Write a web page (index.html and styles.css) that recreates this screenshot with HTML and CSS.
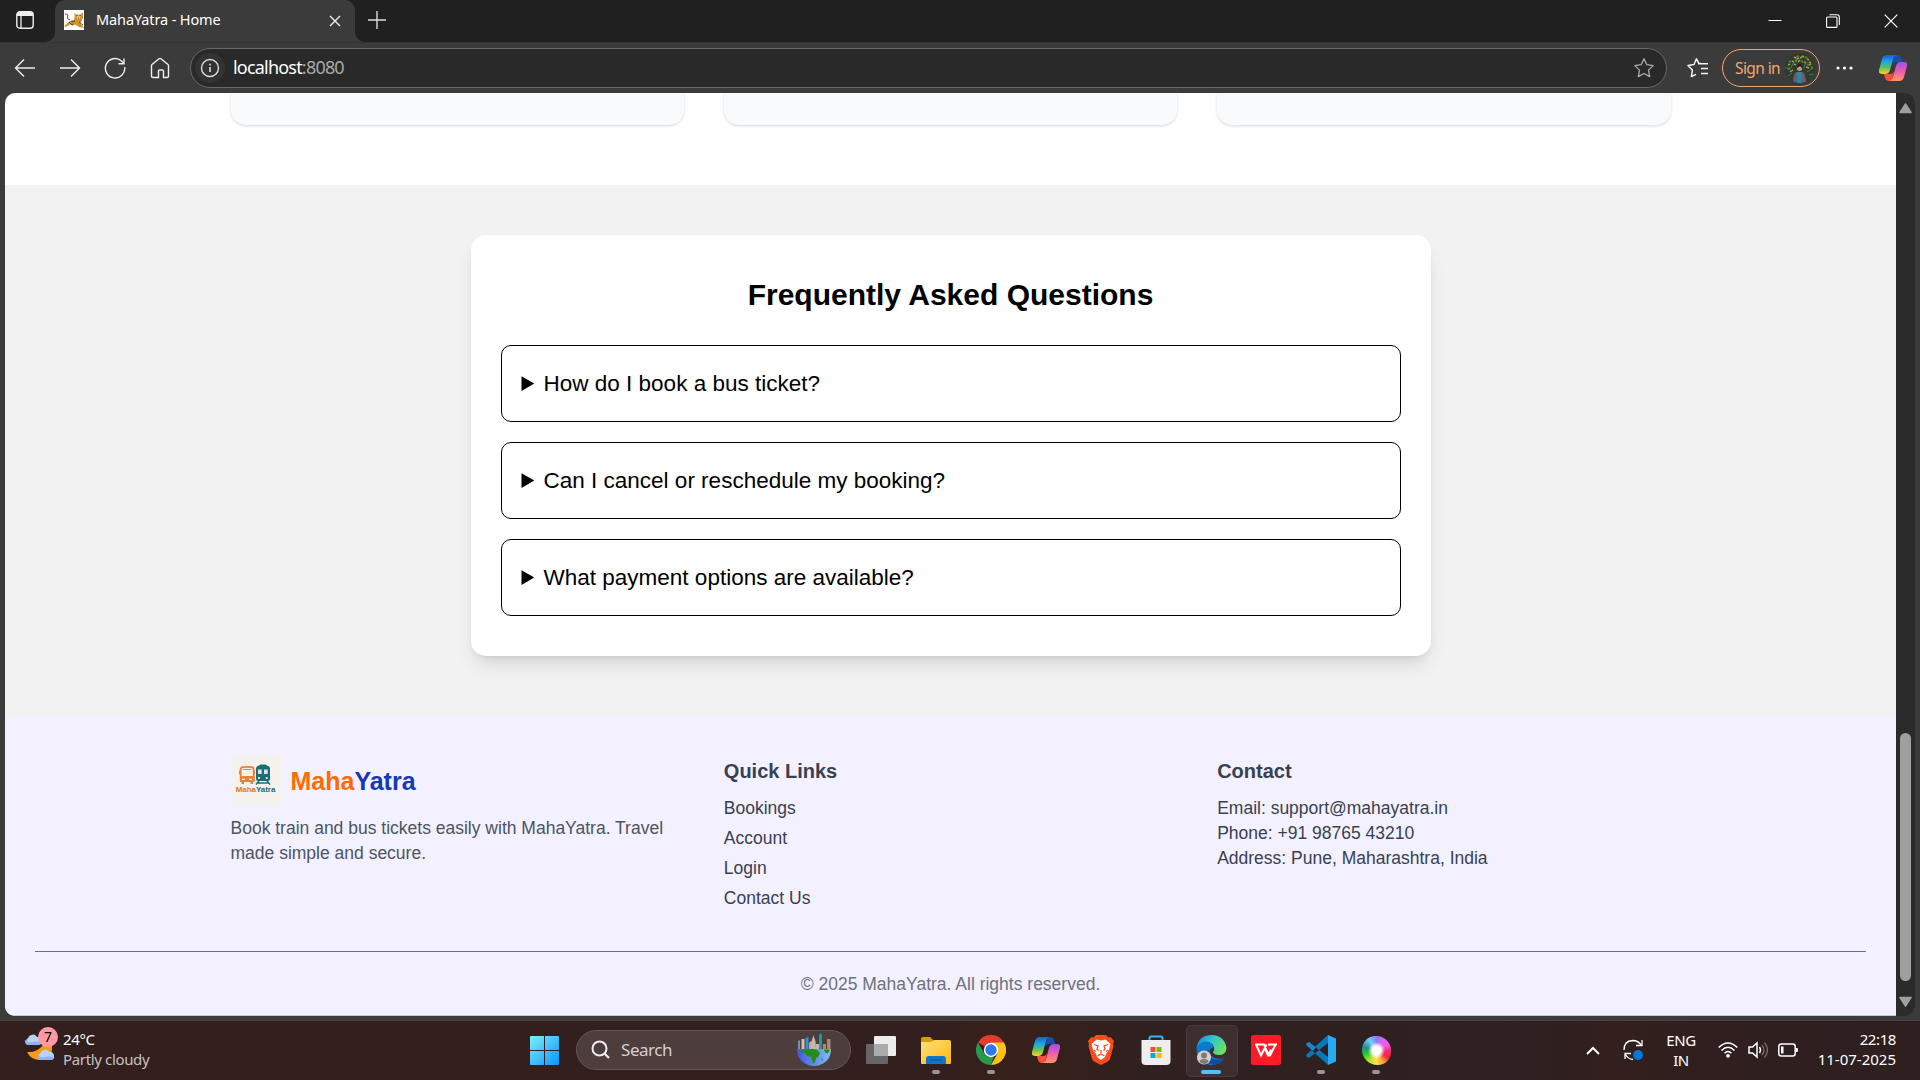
FILE: index.html
```html
<!DOCTYPE html>
<html lang="en">
<head>
<meta charset="utf-8">
<title>MahaYatra - Home</title>
<link rel="stylesheet" href="styles.css">
</head>
<body>
<svg class="defs" width="0" height="0">
  <defs>
    <linearGradient id="cpA" x1="0" y1="0" x2="0" y2="1"><stop offset="0" stop-color="#1b5fd0"/><stop offset=".35" stop-color="#1da5ea"/><stop offset=".65" stop-color="#5cbf62"/><stop offset="1" stop-color="#ffd21e"/></linearGradient>
    <linearGradient id="cpB" x1="0" y1="0" x2="0" y2="1"><stop offset="0" stop-color="#9c50f0"/><stop offset=".5" stop-color="#ee5da8"/><stop offset="1" stop-color="#ff9a62"/></linearGradient>
    <symbol id="copilot" viewBox="0 0 28 26">
      <path d="M15 0h4q2 0 3 3l1 4h-6q-3 0-4 3z" fill="#174fae"/>
      <path d="M13 26H9q-2 0-3-3l-1-4h6q3 0 4-3z" fill="#f4503c"/>
      <path d="M8 0h10q-3 0-4 4l-3 11q-1 4-5 4H3q-4 0-3-4L3 4Q4 0 8 0z" fill="url(#cpA)"/>
      <path d="M20 26H10q3 0 4-4l3-11q1-4 5-4h3q4 0 3 4l-3 11q-1 4-5 4z" fill="url(#cpB)"/>
    </symbol>
    <symbol id="cloud" viewBox="0 0 18 12"><path d="M4 12a4 4 0 0 1 0-7 5 5 0 0 1 9-1 4 4 0 0 1 1 8z" fill="#b9d2f8"/><path d="M4 12a4 4 0 0 1-3-5q3 3 7 2t10 0a4 4 0 0 1-4 3z" fill="#8fb3ee"/></symbol>
  </defs>
</svg>
<div class="desktop">
  <header class="tabstrip">
    <div class="workspace">
      <svg width="18" height="18" viewBox="0 0 18 18"><rect x=".8" y=".8" width="16.4" height="16.4" rx="3" fill="none" stroke="#eee" stroke-width="1.4"/><path d="M1 4q0-3 3-3h10q3 0 3 3v1H1z" fill="#eee"/><path d="M5 5v12" stroke="#eee" stroke-width="1.3"/></svg>
    </div>
    <div class="tab">
      <svg class="favicon" width="20" height="20" viewBox="0 0 20 20"><path d="M0 0h20v20H0z" fill="#fff"/><path d="M0 16q3-2 5-4.500l5-1.500.5-2 0-5 2 1.500h4l2.500-2 0 5-1.500 4-1.500 1.500 4 5-5-1-4-2.500-5 0-4 2.500z" fill="#cf922f"/><path d="M12.500 5h4l-.5 4h-3z" fill="#e8bf6c"/><path d="M6 10Q2 9 3.500 6.500T1 4M11 11q-2 1-4 0M15 12l4 3M5 12l3 3 2-1" fill="none" stroke="#333" stroke-width=".9"/><path d="M12.500 5.500h1M15.500 5.500h1M14 8h1" stroke="#4a3518"/></svg>
      <span class="tab-title">MahaYatra - Home</span>
      <svg class="tab-close" width="12" height="12" viewBox="0 0 12 12"><path d="M1 1l10 10M11 1L1 11" stroke="#eee" stroke-width="1.4"/></svg>
    </div>
    <div class="strip-rest">
      <svg class="newtab" width="18" height="18" viewBox="0 0 18 18"><path d="M9 0v18M0 9h18" stroke="#ddd" stroke-width="1.4"/></svg>
      <div class="window-buttons">
        <svg width="14" height="14" viewBox="0 0 14 14"><path d="M.5 6.500h13" stroke="#fff"/></svg>
        <svg width="14" height="14" viewBox="0 0 14 14"><rect x=".6" y="3" width="10.400" height="10.400" rx="1" fill="none" stroke="#fff" stroke-width="1.1"/><path d="M3.500 .8H11q2.300 0 2.300 2.300v8" fill="none" stroke="#fff" stroke-width="1.100"/></svg>
        <svg width="14" height="14" viewBox="0 0 14 14"><path d="M.7 .7l12.600 12.600M13.300 .7L.7 13.300" stroke="#fff" stroke-width="1.200"/></svg>
      </div>
    </div>
  </header>

  <nav class="toolbar">
    <div class="nav-icons">
      <svg width="22" height="22" viewBox="0 0 22 22"><path d="M10 2.500L1.500 11l8.500 8.500M1.500 11H21"/></svg>
      <svg width="22" height="22" viewBox="0 0 22 22"><path d="M12 2.500l8.500 8.500-8.500 8.500M20.500 11H1"/></svg>
      <svg width="22" height="22" viewBox="0 0 22 22"><path d="M20.700 10A9.700 9.700 0 1 1 17.500 4L20 6.500M20 1.500v5.300h-5.500"/></svg>
      <svg width="22" height="22" viewBox="0 0 22 22"><path d="M2.500 8.500Q2.500 8 3 7.500L10 1.800q1-.8 2 0l7 5.700q.5.500.5 1V19q0 1.500-1.500 1.500h-3.500V14q0-1-1-1h-3q-1 0-1 1v6.500H4Q2.500 20.500 2.500 19z"/></svg>
    </div>
    <div class="address">
      <span class="info"><svg width="20" height="20" viewBox="0 0 20 20"><circle cx="10" cy="10" r="8.500" fill="none" stroke="#ddd" stroke-width="1.400"/><path d="M10 9v5M10 5.700v1.800" stroke="#ddd" stroke-width="1.600"/></svg></span>
      <span class="url">localhost<span class="port">:8080</span></span>
      <svg class="star" width="22" height="22" viewBox="0 0 22 22"><path d="M11 1.800l2.800 5.900 6.400.9-4.700 4.500 1.200 6.500L11 16.500l-5.700 3.100 1.200-6.500L1.800 8.600l6.400-.9z" fill="none" stroke="#aaa" stroke-width="1.300" stroke-linejoin="round"/></svg>
    </div>
    <svg class="favs" width="22" height="22" viewBox="0 0 22 22"><path d="M14 6.500L11.800 6.300 9.500 1.800 7 7.500l-6 .9 4.400 4.500L4.400 19.600 9 17.300M11 6.700h10M14 11.500h7M14 16.500h7" fill="none" stroke="#f4f4f4" stroke-width="1.500" stroke-linejoin="round"/></svg>
    <div class="signin"><span class="signin-text">Sign in</span>
      <svg width="30" height="30" viewBox="0 0 30 30"><clipPath id="av"><circle cx="15" cy="15" r="15"/></clipPath><g clip-path="url(#av)"><path d="M0 0h30v30H0z" fill="#2d3c2c"/><path d="M3 12l2-1M9 4l2 1M17 3l2 1M22 6l2 1M13 9l2-2M24 12l2-1M5 19l3-2M21 14l3 1M7 8l2 1M19 9l2 1M12 6l2-1M15 5l2-1M24 9l2 1M9 11l2 1" stroke="#a1a332" stroke-width="1.500"/><path d="M4 9l2-1M12 3l2 1M20 4l2 1M16 8l2 1M26 14l2 1M3 16l2-1M22 11l2 1M10 8l2-1" stroke="#5f7a35" stroke-width="2"/><path d="M0 14l7 4M9 8l-3 7M21 8l-2 7M28 15l-6 4M12 3l-1 7M3 23l4-3M24 22l4-1" stroke="#587f80" stroke-width=".8"/><path d="M8 30q0-10 4-11h5q4 1 4 11z" fill="#6b5a72"/><path d="M12.500 19h4v11h-4z" fill="#248aa0"/><circle cx="14.500" cy="15.500" r="2.500" fill="#c39789"/><path d="M12 15q0-4 2.500-4t2.500 4l-2-2z" fill="#221c20"/></g></svg>
    </div>
    <svg class="dots" width="17" height="4" viewBox="0 0 17 4"><circle cx="2" cy="2" r="1.600" fill="#fff"/><circle cx="8.500" cy="2" r="1.600" fill="#fff"/><circle cx="15" cy="2" r="1.600" fill="#fff"/></svg>
    <svg class="copilot-btn" width="28" height="26"><use href="#copilot"/></svg>
  </nav>

  <div class="viewport">
    <main class="page">
      <section class="cards"><div class="container grid"><div class="card"></div><div class="card"></div><div class="card"></div></div></section>
      <section class="faq">
        <div class="faq-card">
          <h2>Frequently Asked Questions</h2>
          <details><summary><span>How do I book a bus ticket?</span></summary></details>
          <details><summary><span>Can I cancel or reschedule my booking?</span></summary></details>
          <details><summary><span>What payment options are available?</span></summary></details>
        </div>
      </section>
      <footer class="footer">
        <div class="container grid">
          <div>
            <div class="brand">
              <svg width="50" height="50" viewBox="0 0 50 50"><path d="M0 0h50v50H0z" fill="#f5f1ed"/>
                <path d="M9.700 25V13.500q0-2 2-2.300 4.500-.7 9 0 2 .3 2 2.300V25" fill="none" stroke="#e5853b" stroke-width="1.800"/><path d="M9 20h14.500v6H9zM10.500 25h2.500v3h-2.500zM19.500 25H22v3h-2.500zM8 14.500h1.500v4H8zM22.500 14.500H24v4h-1.500z" fill="#e5853b"/><path d="M11 23.300h3M18 23.300h3" stroke="#f5f1ed" stroke-width="1.300"/><path d="M12 13.500h8.500" stroke="#e5853b"/>
                <path d="M25 23V13q0-3 3-3.500l1.500-1h5l1.500 1q3 .5 3 3.500v10q0 2-2 2H27q-2 0-2-2z" fill="#176e79"/><path d="M27 13.500h3.700v4.500H27zM33 13.500h3.700v4.500H33z" fill="#d9e5e2"/><circle cx="28" cy="22" r="1.100" fill="#f5f1ed"/><circle cx="35.700" cy="22" r="1.100" fill="#f5f1ed"/><path d="M28 25l-3 3.500M36 25l3 3.500M27 27h10" stroke="#176e79" stroke-width="1.500"/>
                <text x="4.800" y="36" textLength="39.500" lengthAdjust="spacingAndGlyphs" class="logo-text"><tspan fill="#dd7434">Maha</tspan><tspan fill="#246b73">Yatra</tspan></text></svg>
              <span class="brand-name"><span class="maha">Maha</span><span class="yatra">Yatra</span></span>
            </div>
            <p class="tagline">Book train and bus tickets easily with MahaYatra. Travel made simple and secure.</p>
          </div>
          <div>
            <h3>Quick Links</h3>
            <ul class="links"><li>Bookings</li><li>Account</li><li>Login</li><li>Contact Us</li></ul>
          </div>
          <div>
            <h3>Contact</h3>
            <p>Email: support@mahayatra.in</p><p>Phone: +91 98765 43210</p><p>Address: Pune, Maharashtra, India</p>
          </div>
        </div>
        <div class="copyright">© 2025 MahaYatra. All rights reserved.</div>
      </footer>
    </main>
    <aside class="scrollbar">
      <svg width="13" height="11" viewBox="0 0 13 11"><path d="M6.500 1L12 9.500H1z" fill="#9f9f9f" stroke="#9f9f9f" stroke-width="1.500" stroke-linejoin="round"/></svg>
      <div class="thumb"></div>
      <svg class="down" width="13" height="11" viewBox="0 0 13 11"><path d="M6.500 10L12 1.500H1z" fill="#9f9f9f" stroke="#9f9f9f" stroke-width="1.500" stroke-linejoin="round"/></svg>
    </aside>
  </div>

  <footer class="taskbar">
    <div class="weather">
      <svg width="36" height="36" viewBox="0 0 36 36"><use href="#cloud" x="0" y="7" width="18" height="12"/><path d="M28 15v8q0 10-12 11-9 0-13-8 10 1 16-7z" fill="#f59a1c"/><use href="#cloud" x="12" y="22" width="19" height="12"/><circle cx="24" cy="11" r="10" fill="#ff99a4"/><text x="24" y="16" text-anchor="middle" class="badge">7</text></svg>
      <div><div class="temp">24°C</div><div class="cond">Partly cloudy</div></div>
    </div>
    <div class="app">
      <svg width="29" height="29" viewBox="0 0 29 29"><defs><linearGradient id="win" x1="0" y1="0" x2="1" y2="1" ><stop offset="0" stop-color="#7af0ff"/><stop offset="1" stop-color="#0c93fb"/></linearGradient></defs><path d="M1 0h13v14H0V1q0-1 1-1zM15 0h13q1 0 1 1v13H15zM0 15h14v14H1q-1 0-1-1zM15 15h14v13q0 1-1 1H15z" fill="url(#win)"/></svg>
    </div>
    <div class="search">
      <svg width="20" height="20" viewBox="0 0 20 20"><circle cx="8.500" cy="8.500" r="7" fill="none" stroke="#eee" stroke-width="2"/><path d="M13.500 13.500l4.500 4.500" stroke="#eee" stroke-width="2.200"/></svg>
      <span>Search</span>
      <svg class="globe" width="36" height="34" viewBox="0 0 36 34"><defs><linearGradient id="sea"><stop offset="0" stop-color="#4358d8"/><stop offset="1" stop-color="#83bdf7"/></linearGradient></defs><path d="M1 16h34q0 10-8 14.500-9 5-18 0Q1 26 1 16z" fill="url(#sea)"/><path d="M2 16V8l2-1v9z" fill="#6f90ae"/><path d="M5.500 6h3v10h-3z" fill="#d2c3a8"/><path d="M9.500 5l3-1v12h-3z" fill="#2e91dc"/><path d="M13 10l2-2 1 1v7h-3z" fill="#b9aaa4"/><path d="M15 16l.5-8L17 4l.5-2 .5 2 1.500 4 .5 8z" fill="#cbb5a8"/><path d="M20 11h3v5h-3z" fill="#c4b4aa"/><path d="M23 2l1.500-2L26 2v14h-3z" fill="#1b9ba1"/><path d="M27 11h3v5h-3zM31 6h3.500v10H31z" fill="#a98973"/><path d="M5 17l5-1 7 0 4 1 3 3-2 4-2 1-1 4-2 2-2-7-4-1-2-3-4-1zM28 16.500l6 0-2 4-3-1zM25 25l2 1-1 2z" fill="#278b1c"/></svg>
    </div>
    <div class="apps">
      <div class="app"><svg width="30" height="28" viewBox="0 0 30 28"><rect x="0" y="8" width="22" height="20" rx="1" fill="#666"/><rect x="8" width="22" height="20" rx="1" fill="#ececec"/><path d="M8 8h14v12H8z" fill="#aaa"/></svg></div>
      <div class="app run"><svg width="30" height="27" viewBox="0 0 30 27"><defs><linearGradient id="fold" x1="0" y1="0" x2="1" y2="1"><stop offset="0" stop-color="#ffe17a"/><stop offset="1" stop-color="#fdb812"/></linearGradient></defs><path d="M0 2q0-2 2-2h7l3 3v4H0z" fill="#dc9a0b"/><path d="M0 5h10l3-2h15q2 0 2 2v21q0 1-1 1H1q-1 0-1-1z" fill="url(#fold)"/><path d="M5 27v-5q0-3 3-3h14q3 0 3 3v5z" fill="#0f76c9"/><path d="M9 23h12" stroke="#07529b"/></svg></div>
      <div class="app run"><svg width="30" height="30" viewBox="0 0 30 30"><path d="M15 15L2 7.500A15 15 0 0 1 28 7.500z" fill="#e33b2e"/><path d="M15 7.500h13A15 15 0 0 1 15 30l6.500-11.500z" fill="#fbc116"/><path d="M2 7.500l6.500 11.200Q12 23 18 21.500L15 30A15 15 0 0 1 2 7.500z" fill="#269a49"/><circle cx="15" cy="15" r="7.200" fill="#fff"/><circle cx="15" cy="15" r="5.700" fill="#2a7bf0"/></svg></div>
      <div class="app"><svg width="28" height="26"><use href="#copilot"/></svg></div>
      <div class="app"><svg width="26" height="30" viewBox="0 0 26 30"><path d="M8 0h10l2.500 2.500 2-.5L26 6l-1 3 .5 2-3.500 13q-1 2-3 3l-6 3-6-3q-2-1-3-3L.5 11 1 9 0 6l3.500-4 2 .5z" fill="#fb4a1c"/><path d="M3.500 9l5-4.500 4.500 1 4.500-1 5 4.500-1.500 6-3 4-1 3-4 3-4-3-1-3-3-4z" fill="#fff"/><path d="M6 9.500l4 1.500-1 3 1.500 1.500M20 9.500L16 11l1 3-1.500 1.500M13 15v4.500M9.500 21l3.500-2 3.500 2M5.500 15l2.500 1.500M20.500 15L18 16.500" fill="none" stroke="#fb4a1c" stroke-width="1.300"/></svg></div>
      <div class="app"><svg width="30" height="30" viewBox="0 0 30 30"><path d="M8.500 7V3q0-1.500 1.500-1.500h10q1.500 0 1.500 1.500v4" fill="none" stroke="#2bb5ea" stroke-width="2"/><path d="M.5 5h29v21q0 4-4 4h-21q-4 0-4-4z" fill="#eee"/><path d="M9.500 12h5v5h-5z" fill="#f25022"/><path d="M15.500 12h5v5h-5z" fill="#7fba00"/><path d="M9.500 18h5v5h-5z" fill="#00a4ef"/><path d="M15.500 18h5v5h-5z" fill="#ffb900"/></svg></div>
      <div class="app run active"><svg width="31" height="30" viewBox="0 0 31 30"><defs><linearGradient id="ed" x1="0" y1=".2" x2="1" y2=".6"><stop offset="0" stop-color="#1688d6"/><stop offset=".45" stop-color="#30c4d3"/><stop offset="1" stop-color="#70e35a"/></linearGradient></defs><path d="M.5 14Q2 0 15.500 0q13 .5 15 13-.5 7-7 7-6 0-6.500-3 2-2 1-5-2-5-8-5-6 1-9.500 7z" fill="url(#ed)"/><path d="M.5 15q1-7 8-8.500 7-.5 9.500 5.500-5 1-4 6 2 7 14 5.500-4 6.500-12.500 6.500Q2 29 .5 15z" fill="#0d79cd"/><path d="M14 14q-4 8 4 10.500 4 1 10-1-4 6.500-11 6.500Q8 27 9 20q1-4 5-6z" fill="#124e9e"/><circle cx="8" cy="22.500" r="7" fill="#d3d0cc"/><circle cx="8" cy="20.500" r="3" fill="#817c78"/><path d="M3.500 27q0-3 4.500-3t4.500 3q-4 4-9 0z" fill="#817c78"/></svg></div>
      <div class="app"><svg width="30" height="30" viewBox="0 0 30 30"><rect width="30" height="30" rx="2.500" fill="#ff1a25"/><path d="M4 9.500h9l4.500 10.500M5 9.500l5 11 5.500-11M17.500 20.500l2.500-6M17 9.500h9M24.500 9.500L19 20.500h-2l-3-7" fill="none" stroke="#fff" stroke-width="2"/></svg></div>
      <div class="app run"><svg width="30" height="30" viewBox="0 0 30 30"><path d="M22 0l8 3.500v23L22 30z" fill="#29a9f2"/><path d="M0 9l3-2 19 15v8L1 11zM0 21l3 2L22 8V0L1 19z" fill="#0878bd"/><path d="M0 9l3-2 7 5.500L7 16z" fill="#1387cf"/></svg></div>
      <div class="app run"><div class="wheel"></div></div>
    </div>
    <div class="tray">
      <svg class="chev" width="14" height="9" viewBox="0 0 14 9"><path d="M1 8l6-6 6 6" fill="none" stroke="#fff" stroke-width="2"/></svg>
      <svg class="sync" width="20" height="22" viewBox="0 0 20 22"><path d="M1 11Q1 2 9.500 1.500q6 0 9 5M19 1v5.500h-6M2 20v-5.500h6M2 15q3 5 8 5.500" fill="none" stroke="#fff" stroke-width="1.300"/><circle cx="15" cy="16" r="5" fill="#0078d7"/></svg>
      <div class="lang">ENG<br>IN</div>
      <svg class="wifi" width="20" height="16" viewBox="0 0 20 16"><path d="M.7 5.500q9.300-9 18.600 0M3.500 8.500q6.500-6.500 13 0M6.500 11.300q3.500-3.500 7 0" fill="none" stroke="#fff" stroke-width="1.500"/><circle cx="10" cy="13.800" r="1.900" fill="#fff"/></svg>
      <svg class="vol" width="21" height="18" viewBox="0 0 21 18"><path d="M1 6h3.500L9 2v14l-4.500-4H1z" fill="none" stroke="#fff" stroke-width="1.500"/><path d="M11.500 6q2 3 0 6" fill="none" stroke="#fff" stroke-width="1.400"/><path d="M14 4q4 5 0 10M16.500 1.500q6 7.500 0 15" fill="none" stroke="#7c6c6b" stroke-width="1.300"/></svg>
      <svg class="bat" width="21" height="14" viewBox="0 0 21 14"><rect x=".8" y="1" width="16.400" height="12" rx="2.500" fill="none" stroke="#fff" stroke-width="1.500"/><path d="M3 3.500h2.500v7H3zM18 5h1q1 0 1 1v2q0 1-1 1h-1z" fill="#fff"/></svg>
      <div class="clock"><span class="time">22:18</span><span class="date">11-07-2025</span></div>
    </div>
  </footer>
</div>
</body>
</html>
```
FILE: styles.css
```css
* { box-sizing: border-box; margin: 0; padding: 0; }
body { width: 1920px; height: 1080px; overflow: hidden; font-family: "Liberation Sans", Arial, sans-serif; background: #3b3b3b; }
svg { display: block; flex: none; }
.defs { position: absolute; }
.desktop { display: flex; flex-direction: column; height: 1080px; }

/* Tab strip */
.tabstrip { display: flex; height: 42px; background: linear-gradient(#3b3b3b, #3b3b3b) 40px 100% / 330px 12px no-repeat #202020; font-family: "Noto Sans", sans-serif; }
.workspace { width: 55px; height: 42px; padding: 11px 0 0 16px; background: #202020; border-radius: 0 0 10px 0; }
.tab { display: flex; align-items: center; width: 300px; height: 42px; padding: 0 14px 2px 9px; background: #3b3b3b; border-radius: 10px 10px 0 0; }
.tab-title { margin: -2px 0 0 12px; font-size: 14.5px; color: #fff; white-space: nowrap; letter-spacing: -0.12px; }
.tab-close { margin-left: auto; margin-top: 1px; }
.strip-rest { display: flex; flex: 1; background: #202020; border-radius: 0 0 0 10px; }
.newtab { margin: 11px 0 0 13px; }
.window-buttons { display: flex; gap: 44px; margin: 14px 22px 0 auto; }

/* Toolbar */
.toolbar { display: flex; align-items: center; height: 51px; padding-bottom: 1px; background: #3b3b3b; font-family: "Noto Sans", sans-serif; border-top: 1px solid #343434; }
.nav-icons { display: flex; gap: 23px; margin-left: 14px; width: 176px; fill: none; stroke: #eee; stroke-width: 1.4; }
.address { display: flex; align-items: center; width: 1477px; height: 40px; border: 1px solid #696969; border-radius: 20px; background: #292929; }
.info { display: flex; align-items: center; justify-content: center; width: 30px; height: 30px; margin-left: 4px; border-radius: 50%; background: #333; }
.url { margin: -1px 0 0 8px; font-size: 18px; letter-spacing: -0.8px; color: #fff; }
.port { color: #a8a8a8; }
.star { margin: 0 11px 0 auto; }
.favs { margin-left: 20px; }
.signin { display: flex; align-items: center; justify-content: space-between; width: 98px; height: 38px; margin-left: 13px; padding: 0 4px 0 12px; border: 1.5px solid #f3a66b; border-radius: 19px; color: #f3a66b; font-size: 15.5px; }
.signin-text { letter-spacing: -0.6px; white-space: nowrap; }
.dots { margin-left: 16px; }
.copilot-btn { margin-left: 26px; }

/* Browser page area */
.viewport { display: flex; height: 923px; margin: 0 5px; border-radius: 10px; overflow: hidden; }
.page { width: 1891px; display: flex; flex-direction: column; background: #fff; border-bottom: 1px solid #c6c4d4; }
.container { width: 1440px; margin: 0 auto; }
.grid { display: grid; grid-template-columns: repeat(3, 1fr); gap: 40px; }
.cards { height: 92px; }
.card { height: 32px; background: #f9fafb; border-radius: 0 0 15px 15px; box-shadow: 0 1px 3px rgba(0,0,0,.16); }
.faq { height: 531px; padding-top: 50px; background: #f2f2f2; }
.faq-card { width: 960px; margin: 0 auto; padding: 40px 30px; background: #fff; border-radius: 15px; box-shadow: 0 12px 19px -4px rgba(0,0,0,.11), 0 5px 8px -5px rgba(0,0,0,.12); }
.faq-card h2 { margin-bottom: 30px; font-size: 30px; line-height: 40px; text-align: center; }
.faq-card details { height: 77px; padding: 20px; border: 1px solid #000; border-radius: 10px; font-size: 22.5px; line-height: 35px; }
.faq-card summary span { margin-left: -1.8px; }
.faq-card details + details { margin-top: 20px; }
.footer { flex: 1; padding: 40px 30px 0; background: #f3f0ff; color: #374151; font-size: 17.5px; line-height: 25px; }
.footer h3 { margin-bottom: 10px; font-size: 20px; line-height: 30px; }
.brand { display: flex; align-items: center; gap: 10px; margin-bottom: 10px; }
.brand-name { font-size: 25px; font-weight: 700; line-height: 35px; }
.maha { color: #ff6b00; }
.yatra { color: #1539b6; }
.tagline { color: #4b5563; }
.logo-text { font: 700 8px "Liberation Sans", sans-serif; }
.links { display: flex; flex-direction: column; gap: 5px; list-style: none; }
.copyright { margin-top: 40px; padding-top: 20px; border-top: 1px solid #6b7280; color: #6b7280; text-align: center; }
.scrollbar { display: flex; flex-direction: column; align-items: center; width: 19px; padding: 10px 0 9px; background: #2b2b2b; border-radius: 0 10px 10px 0; }
.thumb { width: 11px; height: 248px; margin-top: 619px; border-radius: 6px; background: #9f9f9f; }
.down { margin-top: auto; }

/* Taskbar */
.taskbar { display: flex; align-items: center; height: 60px; margin-top: 4px; padding-bottom: 1px; background: linear-gradient(90deg, #321f1e 0%, #321f1e 48%, #38201b 52%, #30201f 60%, #2f2021 78%, #321f1e 84%, #2e1f20 100%); border-top: 1px solid #4b4140; font-family: "Noto Sans", sans-serif; color: #fff; font-size: 15px; line-height: 20px; }
.weather { display: flex; align-items: center; width: 516.5px; padding-left: 25px; letter-spacing: -0.35px; }
.weather > svg { margin: -12px 0 0 -1px; }
.weather > div { margin: -3px 0 0 3px; }
.badge { font: 14px "Noto Sans", sans-serif; fill: #000; letter-spacing: 0; }
.cond { color: #c8c2c1; }
.app { position: relative; display: flex; align-items: center; justify-content: center; width: 55px; height: 50px; }
.app > svg { position: relative; }
.run::after { content: ""; position: absolute; left: 23.5px; bottom: 1px; width: 8px; height: 4px; border-radius: 2px; background: #9c9494; }
.active::before { content: ""; position: absolute; left: 2px; top: 0; width: 50px; height: 50px; border: 1px solid #483b3b; border-radius: 5px; background: #3d2f2f; }
.run.active::after { left: 17.5px; width: 20px; background: #4cc2ff; }
.search { display: flex; align-items: center; width: 275px; height: 40px; margin: 0 2.5px 0 4.5px; padding: 0 18px 0 14px; border: 1px solid #665655; border-radius: 20px; background: #4d3d3c; color: #d5cfce; font-size: 17px; }
.search span { margin: 0 0 0 10px; letter-spacing: -0.45px; }
.globe { margin-left: auto; }
.apps { display: flex; }
.wheel { width: 29px; height: 29px; border-radius: 48% 52% 46% 54%; background: radial-gradient(circle, #fff 0 20%, rgba(255,255,255,0) 42%), conic-gradient(from 0deg, #8f7bf7, #d565f6 30deg, #fd52e0 65deg, #f0307a 90deg, #ed263d 120deg, #f7a13c 150deg, #ffe04a 180deg, #b7e335 215deg, #22d02d 250deg, #278894 285deg, #6fd0f5 325deg, #8f7bf7); }
.tray { display: flex; align-items: center; margin-left: auto; padding-right: 24px; }
.sync { margin-left: 23px; }
.lang { width: 40px; margin: -1px 0 0 18px; text-align: center; letter-spacing: -0.4px; }
.wifi { margin-left: 17px; }
.vol { margin-left: 10px; }
.bat { margin-left: 9px; }
.clock { display: flex; flex-direction: column; align-items: flex-end; width: 97px; margin-top: -3px; white-space: nowrap; }
.time { letter-spacing: -0.4px; }
```
